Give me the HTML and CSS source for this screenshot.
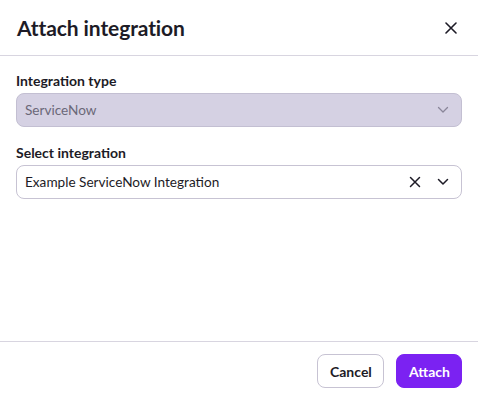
FILE: index.html
```html
<!DOCTYPE html>
<html>
<head>
<meta charset="utf-8">
<link rel="stylesheet" href="styles.css">
</head>
<body>
<div class="dialog">
  <header class="header">
    <h1 class="title">Attach integration</h1>
    <button class="close" aria-label="Close">
      <svg width="12" height="12" viewBox="0 0 12 12"><path d="M1 1L11 11M11 1L1 11" stroke="#1d1b26" stroke-width="1.6" stroke-linecap="round"/></svg>
    </button>
  </header>
  <main class="content">
    <div class="field">
      <label class="label">Integration type</label>
      <div class="select disabled">
        <span class="value">ServiceNow</span>
        <span class="icons">
          <svg class="chev" width="12" height="8" viewBox="0 0 12 8"><path d="M1.5 1.5L6 6L10.5 1.5" fill="none" stroke="#8a8699" stroke-width="1.3" stroke-linecap="round" stroke-linejoin="round"/></svg>
        </span>
      </div>
    </div>
    <div class="field">
      <label class="label">Select integration</label>
      <div class="select">
        <span class="value">Example ServiceNow Integration</span>
        <span class="icons">
          <svg width="12" height="12" viewBox="0 0 12 12"><path d="M1.5 1.5L10.5 10.5M10.5 1.5L1.5 10.5" stroke="#1d1b26" stroke-width="1.5" stroke-linecap="round"/></svg>
          <svg class="chev" width="12" height="8" viewBox="0 0 12 8"><path d="M1.5 1.5L6 6L10.5 1.5" fill="none" stroke="#1d1b26" stroke-width="1.5" stroke-linecap="round" stroke-linejoin="round"/></svg>
        </span>
      </div>
    </div>
  </main>
  <footer class="footer">
    <button class="btn secondary">Cancel</button>
    <button class="btn primary">Attach</button>
  </footer>
</div>
</body>
</html>
```
FILE: styles.css
```css
* { box-sizing: border-box; }
html, body { margin: 0; padding: 0; background: #fff; }
body { font-family: Lato, "Noto Sans", sans-serif; color: #1d1b26; }
.dialog { width: 478px; height: 397px; display: flex; flex-direction: column; }
.header { height: 56px; flex: none; display: flex; align-items: center; justify-content: space-between; padding: 0 20px 0 17px; border-bottom: 1px solid #d8d5e0; }
.title { margin: 0; font-size: 21px; font-weight: 700; letter-spacing: -0.1px; }
.close { background: none; border: 0; padding: 0; width: 14px; height: 14px; display: flex; align-items: center; justify-content: center; }
.content { flex: 1; padding: 15px 16px; display: flex; flex-direction: column; gap: 16px; }
.field { display: flex; flex-direction: column; gap: 2px; }
.label { font-size: 14px; font-weight: 700; line-height: 20px; }
.select { height: 34px; border: 1px solid #c7c3d3; border-radius: 8px; display: flex; align-items: center; justify-content: space-between; padding: 0 12px 0 8px; font-size: 13.6px; }
.select.disabled { background: #d5d1e3; color: #6b6878; border-color: #c3bfd2; }
.icons { display: flex; align-items: center; gap: 16px; }
.footer { height: 56px; flex: none; border-top: 1px solid #d8d5e0; display: flex; justify-content: flex-end; align-items: flex-start; gap: 12px; padding: 12px 16px 0; }
.btn { height: 34px; border-radius: 8px; font-family: Lato, "Noto Sans", sans-serif; font-size: 14px; font-weight: 700; padding: 0 12px; }
.secondary { background: #fff; border: 1px solid #c7c3d3; color: #1d1b26; width: 67px; }
.primary { background: #7b22f2; border: 1px solid #7b22f2; color: #fff; width: 66px; }
```
